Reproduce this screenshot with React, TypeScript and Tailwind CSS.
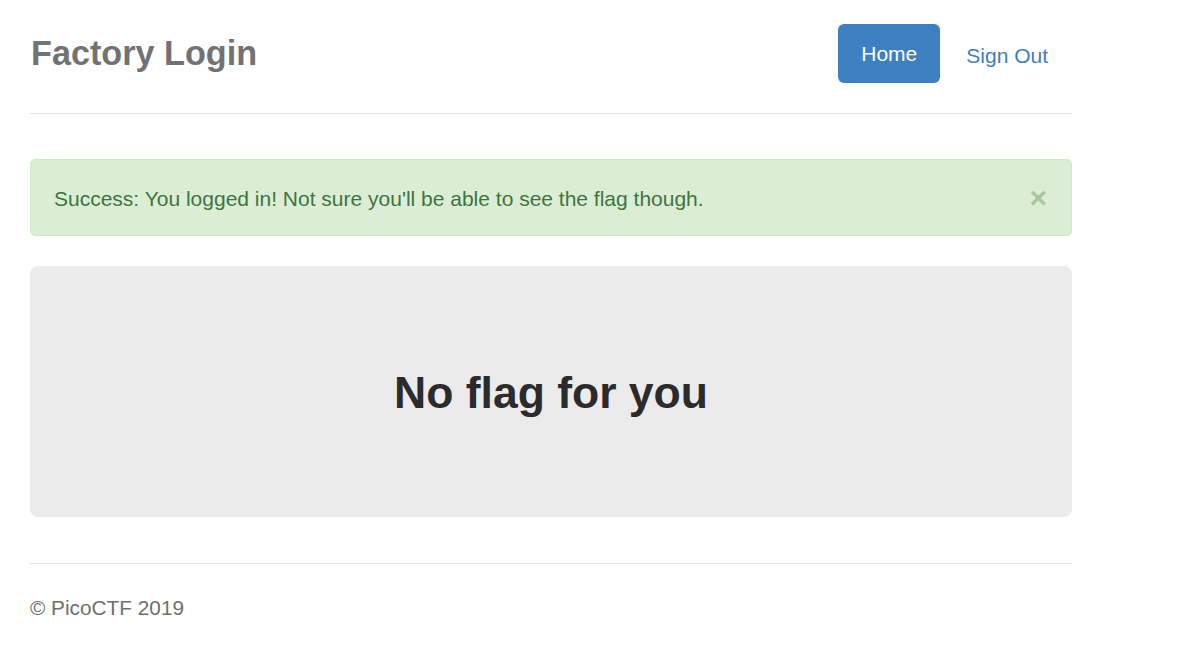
export default function App() {
  return (
    <div className="min-h-screen bg-white font-['Liberation_Sans',Arial,sans-serif]">
      <div className="ml-[30px] w-[1042px] pt-[24px]">
        {/* Header */}
        <header className="border-b border-[#e5e5e5] pb-[30px]">
          <div className="flex h-[59px] items-center justify-between">
            <h3 className="pl-px text-[34.2px] font-bold leading-none text-[#727272]">Factory Login</h3>
            <nav className="flex items-center">
              <a className="flex h-[59px] items-center rounded-[6px] bg-[#3c80c1] px-[23px] text-[21px] text-white">
                Home
              </a>
              <a className="ml-[2px] flex h-[59px] items-center pl-[24px] pr-[24px] pt-[4px] text-[21px] text-[#3c80c1]">
                Sign Out
              </a>
            </nav>
          </div>
        </header>

        {/* Alert */}
        <div className="mt-[45px] flex h-[77px] items-center justify-between rounded-[5px] border border-[#d4e8c9] bg-[#dcedd5] pl-[23px] pr-[24px]">
          <span className="pt-[2px] text-[21px] text-[#3c763d]">
            Success: You logged in! Not sure you'll be able to see the flag though.
          </span>
          <span className="text-[30px] font-bold leading-none text-[#a9c6a0]">×</span>
        </div>

        {/* Jumbotron */}
        <div className="mt-[30px] flex h-[251px] items-center justify-center rounded-[8px] bg-[#ebebeb] pt-[4px]">
          <h1 className="text-[44.5px] font-bold leading-none text-[#2b2b2b]">No flag for you</h1>
        </div>

        {/* Footer */}
        <footer className="mt-[46px] border-t border-[#e5e5e5] pt-[32px]">
          <p className="text-[20.8px] leading-[24px] text-[#6e6e6e]">© PicoCTF 2019</p>
        </footer>
      </div>
    </div>
  );
}
